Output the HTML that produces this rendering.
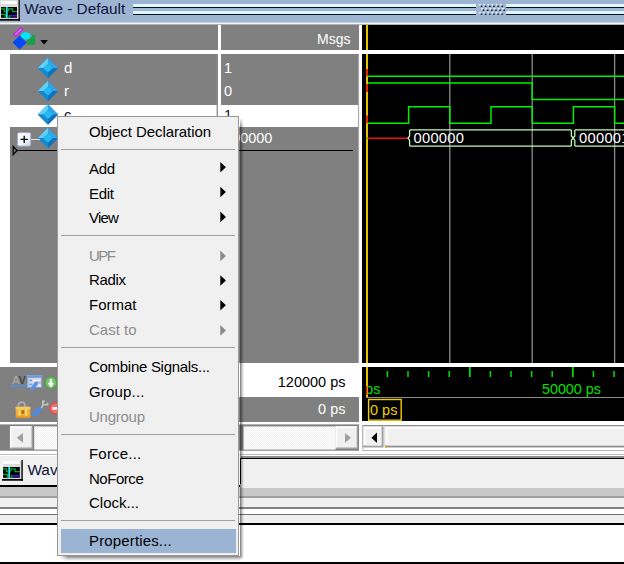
<!DOCTYPE html>
<html>
<head>
<meta charset="utf-8">
<style>
html,body{margin:0;padding:0;}
body{width:624px;height:564px;overflow:hidden;background:#fff;position:relative;font-family:"Liberation Sans",sans-serif;font-size:14.5px;}
.a{position:absolute;}
.t{position:absolute;white-space:nowrap;line-height:20px;height:20px;}
#root{position:absolute;left:0;top:0;width:624px;height:564px;overflow:hidden;}
.mi{position:absolute;left:89px;white-space:nowrap;line-height:20px;height:20px;color:#000;font-size:15px;}
.dis{color:#8d8d8d;}
.sep{position:absolute;left:61px;width:174px;height:1px;background:#a0a0a0;}
</style>
</head>
<body>
<div id="root">

<!-- title bar -->
<div class="a" style="left:0;top:0;width:624px;height:22px;background:#9db4d3;"></div>
<div class="a" style="left:0;top:22px;width:624px;height:1px;background:#c9d4e2;"></div>
<div class="a" style="left:0;top:23px;width:624px;height:1px;background:#f4f4f4;"></div>
<div class="a" style="left:0;top:24px;width:624px;height:1px;background:#b0b0b0;"></div>
<!-- grip lines -->
<div class="a" style="left:133px;top:4px;width:343px;height:2.6px;background:#dcf8fc;"></div>
<div class="a" style="left:133px;top:6.6px;width:343px;height:1.3px;background:#0c1018;"></div>
<div class="a" style="left:133px;top:10.8px;width:343px;height:2.8px;background:#dcf8fc;"></div>
<div class="a" style="left:133px;top:13.7px;width:343px;height:1.3px;background:#0c1018;"></div>
<div class="a" style="left:506px;top:4px;width:118px;height:2.6px;background:#dcf8fc;"></div>
<div class="a" style="left:506px;top:6.6px;width:118px;height:1.3px;background:#0c1018;"></div>
<div class="a" style="left:506px;top:10.8px;width:118px;height:2.8px;background:#dcf8fc;"></div>
<div class="a" style="left:506px;top:13.7px;width:118px;height:1.3px;background:#0c1018;"></div>
<svg class="a" style="left:470px;top:0px;" width="45" height="20" viewBox="470 0 45 20"><rect x="479.20" y="4.00" width="1.7" height="1.5" fill="#f8fcff"/><rect x="480.70" y="5.60" width="1.6" height="1.4" fill="#1c2230"/><rect x="483.35" y="4.00" width="1.7" height="1.5" fill="#f8fcff"/><rect x="484.85" y="5.60" width="1.6" height="1.4" fill="#1c2230"/><rect x="487.50" y="4.00" width="1.7" height="1.5" fill="#f8fcff"/><rect x="489.00" y="5.60" width="1.6" height="1.4" fill="#1c2230"/><rect x="491.65" y="4.00" width="1.7" height="1.5" fill="#f8fcff"/><rect x="493.15" y="5.60" width="1.6" height="1.4" fill="#1c2230"/><rect x="495.80" y="4.00" width="1.7" height="1.5" fill="#f8fcff"/><rect x="497.30" y="5.60" width="1.6" height="1.4" fill="#1c2230"/><rect x="499.95" y="4.00" width="1.7" height="1.5" fill="#f8fcff"/><rect x="501.45" y="5.60" width="1.6" height="1.4" fill="#1c2230"/><rect x="481.20" y="7.95" width="1.7" height="1.5" fill="#f8fcff"/><rect x="482.70" y="9.55" width="1.6" height="1.4" fill="#1c2230"/><rect x="485.35" y="7.95" width="1.7" height="1.5" fill="#f8fcff"/><rect x="486.85" y="9.55" width="1.6" height="1.4" fill="#1c2230"/><rect x="489.50" y="7.95" width="1.7" height="1.5" fill="#f8fcff"/><rect x="491.00" y="9.55" width="1.6" height="1.4" fill="#1c2230"/><rect x="493.65" y="7.95" width="1.7" height="1.5" fill="#f8fcff"/><rect x="495.15" y="9.55" width="1.6" height="1.4" fill="#1c2230"/><rect x="497.80" y="7.95" width="1.7" height="1.5" fill="#f8fcff"/><rect x="499.30" y="9.55" width="1.6" height="1.4" fill="#1c2230"/><rect x="501.95" y="7.95" width="1.7" height="1.5" fill="#f8fcff"/><rect x="503.45" y="9.55" width="1.6" height="1.4" fill="#1c2230"/><rect x="479.20" y="11.90" width="1.7" height="1.5" fill="#f8fcff"/><rect x="480.70" y="13.50" width="1.6" height="1.4" fill="#1c2230"/><rect x="483.35" y="11.90" width="1.7" height="1.5" fill="#f8fcff"/><rect x="484.85" y="13.50" width="1.6" height="1.4" fill="#1c2230"/><rect x="487.50" y="11.90" width="1.7" height="1.5" fill="#f8fcff"/><rect x="489.00" y="13.50" width="1.6" height="1.4" fill="#1c2230"/><rect x="491.65" y="11.90" width="1.7" height="1.5" fill="#f8fcff"/><rect x="493.15" y="13.50" width="1.6" height="1.4" fill="#1c2230"/><rect x="495.80" y="11.90" width="1.7" height="1.5" fill="#f8fcff"/><rect x="497.30" y="13.50" width="1.6" height="1.4" fill="#1c2230"/><rect x="499.95" y="11.90" width="1.7" height="1.5" fill="#f8fcff"/><rect x="501.45" y="13.50" width="1.6" height="1.4" fill="#1c2230"/></svg>
<div class="t" style="left:24.3px;top:-0.6px;font-size:15.35px;color:#10143a;">Wave - Default</div>
<!-- title icon -->
<svg class="a" style="left:0;top:0;" width="21" height="21" viewBox="0 0 21 21">
<rect x="0" y="0" width="20" height="21" fill="#dcdcdc"/>
<rect x="1" y="1.2" width="16" height="2.6" fill="#ffffff"/>
<rect x="1" y="7" width="16" height="10.8" fill="#000"/>
<rect x="18.5" y="0" width="1.3" height="21" fill="#000"/>
<rect x="0" y="19" width="19.8" height="1.7" fill="#000"/>
<path d="M1 8.8 H4.3 V11.6 H6 M8.6 11.6 V8.8 H12.5 V11.6 H17" stroke="#00a838" stroke-width="1.3" fill="none"/>
<path d="M1 14.3 H5.2 V17.6 M8.4 17.6 H9.4 V15" stroke="#00a838" stroke-width="1.3" fill="none"/>
<rect x="6" y="7" width="1.7" height="10.8" fill="#30e8f0"/>
<rect x="10" y="14.9" width="7" height="1.7" fill="#4410e0"/>
</svg>

<!-- main gray panes -->
<div class="a" style="left:0;top:25px;width:218px;height:25.4px;background:#808080;"></div>
<div class="a" style="left:221px;top:25px;width:138px;height:25.4px;background:#808080;"></div>
<div class="a" style="left:362px;top:25px;width:262px;height:25.4px;background:#000;"></div>

<!-- body panes -->
<div class="a" style="left:10px;top:54px;width:208px;height:309px;background:#808080;"></div>
<div class="a" style="left:221px;top:54px;width:138px;height:309px;background:#808080;"></div>
<div class="a" style="left:362px;top:54px;width:262px;height:309px;background:#000;"></div>

<!-- selected row -->
<div class="a" style="left:10px;top:104.7px;width:208px;height:22px;background:#fff;"></div>
<div class="a" style="left:221px;top:104.7px;width:138px;height:22px;background:#fff;"></div>

<!-- header content -->
<svg class="a" style="left:10px;top:25px;" width="42" height="26" viewBox="10 25 42 26">
<polygon points="12.7,34.8 20.8,27 24,29.2 15.9,37.2" fill="#c424e4"/>
<polygon points="14.6,34.6 20.9,28.6 22,29.4 15.7,35.6" fill="#e070f0"/>
<rect x="27" y="34.6" width="8" height="10.2" fill="#18a048"/>
<ellipse cx="26.6" cy="36" rx="5" ry="3.8" fill="#8090a4"/>
<ellipse cx="25.6" cy="35.9" rx="4.9" ry="3.6" fill="#00e4fc"/>
<polygon points="19.6,35.6 26.8,42.4 19.6,49.6 12.7,42.4" fill="#0848f0"/>
<polygon points="40.3,40.1 47.9,40.1 44.1,44.5" fill="#000"/>
</svg>
<div class="t" style="left:317px;top:29px;font-size:14px;color:#fff;">Msgs</div>
<!-- cursor in header -->
<div class="a" style="left:366px;top:25px;width:2px;height:25px;background:#e8c000;"></div>

<!-- name pane rows -->
<svg class="a" style="left:10px;top:54px;" width="60" height="104" viewBox="10 54 60 104">
<g transform="translate(48,68)">
<polygon points="0,-10.2 10.2,0 0,10.2 -10.2,0" fill="#1a8cd0"/>
<polygon points="0,-10.2 -10.2,0 -4.6,0 0,-4.6" fill="#64d0f8"/>
<polygon points="0,-10.2 10.2,0 4.6,0 0,-4.6" fill="#34a4e4"/>
<polygon points="0,10.2 -10.2,0 -4.6,0 0,4.6" fill="#1c88cc"/>
<polygon points="0,10.2 10.2,0 4.6,0 0,4.6" fill="#1272bc"/>
<polygon points="0,-4.6 4.6,0 0,4.6 -4.6,0" fill="#20bcf4"/>
</g>
<g transform="translate(48,91)">
<polygon points="0,-10.2 10.2,0 0,10.2 -10.2,0" fill="#1a8cd0"/>
<polygon points="0,-10.2 -10.2,0 -4.6,0 0,-4.6" fill="#64d0f8"/>
<polygon points="0,-10.2 10.2,0 4.6,0 0,-4.6" fill="#34a4e4"/>
<polygon points="0,10.2 -10.2,0 -4.6,0 0,4.6" fill="#1c88cc"/>
<polygon points="0,10.2 10.2,0 4.6,0 0,4.6" fill="#1272bc"/>
<polygon points="0,-4.6 4.6,0 0,4.6 -4.6,0" fill="#20bcf4"/>
</g>
<g transform="translate(48,114.5)">
<polygon points="0,-10.2 10.2,0 0,10.2 -10.2,0" fill="#1a8cd0"/>
<polygon points="0,-10.2 -10.2,0 -4.6,0 0,-4.6" fill="#64d0f8"/>
<polygon points="0,-10.2 10.2,0 4.6,0 0,-4.6" fill="#34a4e4"/>
<polygon points="0,10.2 -10.2,0 -4.6,0 0,4.6" fill="#1c88cc"/>
<polygon points="0,10.2 10.2,0 4.6,0 0,4.6" fill="#1272bc"/>
<polygon points="0,-4.6 4.6,0 0,4.6 -4.6,0" fill="#20bcf4"/>
</g>
<g transform="translate(48,138)">
<polygon points="0,-10.2 10.2,0 0,10.2 -10.2,0" fill="#1a8cd0"/>
<polygon points="0,-10.2 -10.2,0 -4.6,0 0,-4.6" fill="#64d0f8"/>
<polygon points="0,-10.2 10.2,0 4.6,0 0,-4.6" fill="#34a4e4"/>
<polygon points="0,10.2 -10.2,0 -4.6,0 0,4.6" fill="#1c88cc"/>
<polygon points="0,10.2 10.2,0 4.6,0 0,4.6" fill="#1272bc"/>
<polygon points="0,-4.6 4.6,0 0,4.6 -4.6,0" fill="#20bcf4"/>
</g>
<line x1="31" y1="139.5" x2="40" y2="139.5" stroke="#e0e0e0" stroke-width="1"/>
<defs><linearGradient id="pg" x1="0" y1="0" x2="1" y2="1"><stop offset="0" stop-color="#ffffff"/><stop offset="0.6" stop-color="#f0f2fa"/><stop offset="1" stop-color="#c4cce4"/></linearGradient></defs><rect x="17.4" y="132.6" width="13.4" height="13.6" rx="1.6" fill="url(#pg)" stroke="#98a0bc" stroke-width="0.9"/>
<path d="M20.6 139.4 H27.8 M24.2 135.8 V143" stroke="#000" stroke-width="1.3"/>
<polygon points="13.2,146.4 17,150.5 13.2,154.6" fill="none" stroke="#000" stroke-width="1.3"/>
</svg>
<div class="a" style="left:17px;top:149.9px;width:201px;height:1.2px;background:#000;"></div>
<div class="a" style="left:221px;top:149.9px;width:132px;height:1.2px;background:#000;"></div>
<div class="t" style="left:64px;top:58px;color:#fff;font-size:15px;">d</div>
<div class="t" style="left:64px;top:81px;color:#fff;font-size:15px;">r</div>
<div class="t" style="left:64px;top:104.5px;color:#101030;font-size:15px;">c</div>
<div class="t" style="left:64px;top:128px;color:#fff;font-size:15px;">q</div>
<svg class="a" style="left:214px;top:54px;" width="148" height="310" viewBox="214 54 148 310"><rect x="216.6" y="54" width="1.3" height="309.5" fill="#8a8a8a"/><rect x="358" y="54" width="1.1" height="309.5" fill="#a8a8a8"/></svg>
<!-- values -->
<div class="t" style="left:224px;top:58px;color:#fff;">1</div>
<div class="t" style="left:224px;top:81px;color:#fff;">0</div>
<div class="t" style="left:224px;top:105px;color:#101030;">1</div>
<div class="t" style="left:224px;top:128px;color:#fff;">000000</div>

<!-- waveform -->
<svg class="a" style="left:362px;top:54px;" width="262" height="309" viewBox="362 54 262 309">
<g stroke="#8c8c8c" stroke-width="1.3">
<line x1="449.8" y1="54" x2="449.8" y2="363"/>
<line x1="532.2" y1="54" x2="532.2" y2="363"/>
<line x1="614.6" y1="54" x2="614.6" y2="363"/>
</g>
<g stroke="#00f000" stroke-width="1.5" fill="none">
<path d="M368 76.3 H624"/>
<path d="M368 83 H532.2 V99.6 H624"/>
<path d="M368 123.2 H408.6 V106.7 H449.8 V123.2 H491 V106.7 H532.2 V123.2 H573.4 V106.7 H614.6 V123.2 H624"/>
</g>
<path d="M368 138.2 H408" stroke="#f01010" stroke-width="1.5"/>
<g stroke="#c0f8b8" stroke-width="1.3" fill="none" stroke-linejoin="round">
<path d="M408 138.2 L409.6 136 V130.4 L410.2 129.9 H570.8 L571.4 130.4 V136 L573.1 138.2 L571.4 140.4 V145.6 L570.8 146.1 H410.2 L409.6 145.6 V140.4 Z"/>
<path d="M624 129.9 H575.4 L574.8 130.4 V136 L573.1 138.2 L574.8 140.4 V145.6 L575.4 146.1 H624"/>
</g>
<!-- cursor -->
<rect x="366" y="54" width="2" height="309" fill="#e8c000"/>
<rect x="366" y="69" width="2" height="7.3" fill="#e82800"/>
<rect x="366" y="84" width="2" height="8" fill="#e82800"/>
<rect x="366" y="115.5" width="2" height="7.6" fill="#e82800"/>
<rect x="366" y="137.4" width="2" height="1.6" fill="#40c020"/>
</svg>
<div class="t" style="left:413.6px;top:128.3px;color:#fff;font-size:14.7px;letter-spacing:0.25px;">000000</div>
<div class="t" style="left:579px;top:128.3px;color:#fff;font-size:14.7px;letter-spacing:0.3px;">000001</div>

<!-- footer: name pane icons area -->
<div class="a" style="left:0;top:367px;width:218px;height:55px;background:#808080;"></div>
<!-- footer: value pane -->
<div class="a" style="left:221px;top:363px;width:138px;height:34px;background:#fff;"></div>
<div class="a" style="left:221px;top:397px;width:138px;height:25px;background:#808080;"></div>
<div class="t" style="left:221px;width:124.5px;text-align:right;top:372px;color:#000;">120000 ps</div>
<div class="t" style="left:221px;width:124.5px;text-align:right;top:399px;color:#fff;">0 ps</div>
<!-- footer: wave pane -->
<div class="a" style="left:362px;top:367px;width:262px;height:54px;background:#000;"></div>
<div class="a" style="left:366px;top:397.1px;width:258px;height:1.4px;background:#8c8c8c;"></div>
<div class="t" style="left:365.2px;top:378.6px;color:#00e000;font-size:14.3px;">ps</div>
<svg class="a" style="left:362px;top:367px;" width="262" height="55" viewBox="362 367 262 55">
<g stroke="#00e000" stroke-width="1.5">
<line x1="387.4" y1="371" x2="387.4" y2="377"/>
<line x1="408.0" y1="371" x2="408.0" y2="377"/>
<line x1="428.6" y1="371" x2="428.6" y2="377"/>
<line x1="449.2" y1="371" x2="449.2" y2="377"/>
<line x1="469.8" y1="367" x2="469.8" y2="377" stroke-width="1.8"/>
<line x1="490.4" y1="371" x2="490.4" y2="377"/>
<line x1="511.0" y1="371" x2="511.0" y2="377"/>
<line x1="531.6" y1="371" x2="531.6" y2="377"/>
<line x1="552.2" y1="371" x2="552.2" y2="377"/>
<line x1="572.8" y1="367" x2="572.8" y2="377" stroke-width="1.8"/>
<line x1="593.4" y1="371" x2="593.4" y2="377"/>
<line x1="614.0" y1="371" x2="614.0" y2="377"/>
</g>
<rect x="366" y="367" width="2" height="30" fill="#e8c000"/>
<rect x="366" y="386" width="1.4" height="9" fill="#e82800"/>
<rect x="368.6" y="399.5" width="32.6" height="20.7" fill="none" stroke="#f4cc00" stroke-width="1.4"/>
</svg>
<div class="t" style="left:542px;top:379px;color:#00e000;font-size:14.3px;">50000 ps</div>
<div class="t" style="left:370px;top:400px;color:#f0d000;font-size:14.5px;">0 ps</div>

<!-- scrollbars -->

<svg class="a" style="left:0;top:420px;" width="624" height="32" viewBox="0 420 624 32">
<defs><pattern id="chk" width="2" height="2" patternUnits="userSpaceOnUse"><rect width="2" height="2" fill="#f0f0f0"/><rect x="0" y="0" width="1" height="1" fill="#fff"/><rect x="1" y="1" width="1" height="1" fill="#fff"/></pattern></defs>
<rect x="0" y="424.4" width="218" height="26.3" fill="#808080"/><rect x="221" y="424.4" width="138" height="26.3" fill="#808080"/>
<rect x="34.2" y="426.4" width="183.8" height="23.2" fill="url(#chk)"/>
<rect x="10" y="426.4" width="22" height="22" fill="#f0f0f0"/>
<path d="M10.7 448.4 V427.1 H32" stroke="#fff" stroke-width="1.5" fill="none"/>
<path d="M10.5 448.2 H32.2 V426.6" stroke="#a0a0a0" stroke-width="1.4" fill="none"/>
<polygon points="16.8,437.8 23,433 23,442.7" fill="#a0a0a0"/>
<!-- value scroll -->
<rect x="243.5" y="426.4" width="92" height="23.2" fill="url(#chk)"/>
<rect x="335.5" y="426.4" width="22" height="22" fill="#f0f0f0"/>
<path d="M336.2 448.4 V427.1 H357.5" stroke="#fff" stroke-width="1.5" fill="none"/>
<path d="M336 448.2 H357.4 V426.6" stroke="#a0a0a0" stroke-width="1.4" fill="none"/>
<polygon points="351,437.8 345,433 345,442.7" fill="#a0a0a0"/>
<!-- wave scroll -->
<rect x="362" y="421" width="262" height="30" fill="#fff"/>
<rect x="362.2" y="425" width="261.8" height="1.2" fill="#8c8c8c"/>
<rect x="362.2" y="425" width="1.2" height="24" fill="#a8a8a8"/>
<rect x="363.4" y="426.2" width="260.6" height="21.2" fill="#e0e0e0"/>
<!-- button -->
<rect x="363.4" y="426.6" width="20" height="20.8" fill="#a0a0a0"/>
<rect x="363.4" y="426.6" width="18" height="18.8" fill="#ffffff"/>
<rect x="365.6" y="428.8" width="15.8" height="16.6" fill="#f0f0f0"/>
<polygon points="371.4,437.8 377,432.6 377,443" fill="#000"/>
<!-- thumb -->
<rect x="385.2" y="426.6" width="238.8" height="20.8" fill="#909090"/>
<rect x="385.2" y="426.6" width="238.8" height="18.8" fill="#ffffff"/>
<rect x="387.4" y="428.4" width="236.6" height="17" fill="#f0f0f0"/>
<rect x="385" y="446.4" width="2" height="1.4" fill="#e8c000"/>
</svg>

<!-- tab bar -->
<div class="a" style="left:0;top:450.6px;width:624px;height:3.4px;background:#fff;"></div>
<div class="a" style="left:362px;top:449.6px;width:262px;height:1px;background:#b4b4b4;"></div>
<div class="a" style="left:0;top:453.9px;width:624px;height:1.1px;background:#bcbcbc;"></div>
<div class="a" style="left:0;top:455px;width:624px;height:1.3px;background:#fff;"></div>
<div class="a" style="left:0;top:456.3px;width:624px;height:32px;background:#f0f0f0;"></div>
<div class="a" style="left:241px;top:456.3px;width:383px;height:1.3px;background:#909090;"></div>
<div class="a" style="left:240px;top:457.6px;width:384px;height:1.4px;background:#000;"></div>
<div class="a" style="left:239.8px;top:457.6px;width:1.6px;height:26px;background:#000;"></div>
<div class="a" style="left:0;top:484.6px;width:239.6px;height:2.1px;background:#000;"></div>
<!-- tab icon -->
<svg class="a" style="left:2.1px;top:460.3px;" width="22" height="21" viewBox="0 0 21 21" preserveAspectRatio="none">
<rect x="0" y="0" width="20" height="21" fill="#dcdcdc"/>
<rect x="1" y="1.2" width="16" height="2.6" fill="#ffffff"/>
<rect x="1" y="7" width="16" height="10.8" fill="#000"/>
<rect x="18.5" y="0" width="1.3" height="21" fill="#000"/>
<rect x="0" y="19" width="19.8" height="1.7" fill="#000"/>
<path d="M1 8.8 H4.3 V11.6 H6 M8.6 11.6 V8.8 H12.5 V11.6 H17" stroke="#00a838" stroke-width="1.3" fill="none"/>
<path d="M1 14.3 H5.2 V17.6 M8.4 17.6 H9.4 V15" stroke="#00a838" stroke-width="1.3" fill="none"/>
<rect x="6" y="7" width="1.7" height="10.8" fill="#30e8f0"/>
<rect x="10" y="14.9" width="7" height="1.7" fill="#4410e0"/>
<rect x="0" y="0" width="18.5" height="1" fill="#f4f4f4"/><rect x="0" y="0" width="1" height="19" fill="#f4f4f4"/>
</svg>
<div class="t" style="left:27.4px;top:460.3px;font-size:15.4px;color:#10143a;">Wave</div>

<!-- bottom bands -->
<div class="a" style="left:0;top:487px;width:624px;height:9.3px;background:#c8c8c8;"></div>
<div class="a" style="left:241px;top:485px;width:383px;height:3px;background:#f0f0f0;"></div>
<div class="a" style="left:0;top:496.3px;width:624px;height:1.5px;background:#a0a0a0;"></div>
<div class="a" style="left:0;top:497.8px;width:624px;height:9.2px;background:#f0f0f0;"></div>
<div class="a" style="left:0;top:507px;width:624px;height:1.5px;background:#808080;"></div>
<div class="a" style="left:0;top:508.5px;width:624px;height:5.3px;background:#fff;"></div>
<div class="a" style="left:0;top:513.8px;width:624px;height:1.6px;background:#707070;"></div>
<div class="a" style="left:0;top:515.4px;width:624px;height:7.6px;background:#f0f0f0;"></div>
<div class="a" style="left:0;top:523px;width:624px;height:1.6px;background:#000;"></div>
<div class="a" style="left:0;top:524.6px;width:624px;height:38px;background:#fff;"></div>
<div class="a" style="left:0;top:562px;width:624px;height:2px;background:#000;"></div>

<!-- footer icons -->
<svg class="a" style="left:10px;top:372px;" width="50" height="48" viewBox="10 372 50 48">
<!-- AV icon -->
<text x="12" y="383.8" font-family="Liberation Sans, sans-serif" font-size="11" font-weight="bold" fill="#a4a4a4">A</text>
<text x="18.4" y="383.8" font-family="Liberation Sans, sans-serif" font-size="11" font-weight="bold" fill="#484848">V</text>
<path d="M12 385.8 H25.3 M12.3 384.2 V387.6 M25 384.2 V387.6" stroke="#4a90f0" stroke-width="1.3" fill="none"/>
<!-- window icon -->
<rect x="27.3" y="375.2" width="14.8" height="12.6" fill="#d4d8e2"/>
<rect x="27.3" y="375.2" width="14.8" height="2.6" fill="#6898e0"/>
<rect x="27.3" y="377.8" width="1" height="10" fill="#78a0e0"/>
<rect x="41.1" y="377.8" width="1" height="10" fill="#78a0e0"/>
<rect x="27.3" y="387" width="14.8" height="1" fill="#78a0e0"/>
<rect x="29.3" y="379.6" width="2.6" height="1.6" fill="#6c9ce8"/>
<rect x="29.3" y="383.6" width="2.6" height="1.6" fill="#6c9ce8"/>
<rect x="33" y="379.6" width="7" height="1.6" fill="#eef0f4"/>
<rect x="37" y="381.6" width="4" height="2" fill="#b4b8c0"/>
<rect x="38.5" y="384.6" width="2" height="1.8" fill="#f4f4f8"/>
<path d="M32.2 388.6 L36.2 383.4" stroke="#5a90e8" stroke-width="3.6" stroke-linecap="round"/>
<!-- green circle -->
<circle cx="50.9" cy="382.6" r="6.3" fill="#50a848"/>
<circle cx="50.9" cy="382.6" r="5.1" fill="#74c868"/>
<path d="M50.9 379 V385.6 M48.9 382.8 L50.9 385.8 L52.9 382.8" stroke="#fff" stroke-width="2.2" fill="none"/>
<!-- lock -->
<path d="M18.4 407.5 V405.5 A3.3 3.3 0 0 1 25 405.5 V407.5" stroke="#b0b0b0" stroke-width="1.7" fill="none"/>
<rect x="15.7" y="406.8" width="14.6" height="10.8" rx="0.8" fill="#eeb038"/>
<rect x="15.7" y="406.8" width="14.6" height="2.6" fill="#f4cc68"/>
<rect x="15.7" y="415.6" width="14.6" height="2" fill="#e89c20"/>
<rect x="18.6" y="409.6" width="1.8" height="6" fill="#f8dc80"/><rect x="25.2" y="409.6" width="1.8" height="6" fill="#f8dc80"/><rect x="21.5" y="410.4" width="2.8" height="3.4" fill="#a87010"/>
<!-- wrench -->
<path d="M34.6 414.2 L39.8 409.4" stroke="#5088e0" stroke-width="4.6" stroke-linecap="round"/>
<path d="M41.2 408 L42.8 405.6 V401.4 H45 M43.2 404.8 H47.6 V402.6" stroke="#c4c4c4" stroke-width="1.6" fill="none"/>
<!-- red circle -->
<circle cx="55.5" cy="408.4" r="6.3" fill="#e04848"/>
<circle cx="55.5" cy="408.4" r="5" fill="#f07070"/>
<rect x="52.3" y="407.2" width="6.4" height="2.4" fill="#fff"/>
</svg>

<!-- context menu -->
<div class="a" style="left:60px;top:556px;width:180px;height:4.5px;background:linear-gradient(to bottom, rgba(0,0,0,0.5), rgba(0,0,0,0.18) 55%, rgba(0,0,0,0));-webkit-mask-image:linear-gradient(to right, transparent, #000 8px);mask-image:linear-gradient(to right, transparent, #000 8px);"></div>
<div class="a" style="left:240px;top:118px;width:4px;height:438px;background:linear-gradient(to right, rgba(0,0,0,0.52), rgba(0,0,0,0.2) 55%, rgba(0,0,0,0));-webkit-mask-image:linear-gradient(to bottom, transparent, #000 9px);mask-image:linear-gradient(to bottom, transparent, #000 9px);"></div>
<div class="a" style="left:240px;top:556px;width:4px;height:4.5px;background:radial-gradient(circle at 0 0, rgba(0,0,0,0.45), rgba(0,0,0,0) 4.2px);"></div>
<div class="a" style="left:57.3px;top:115.6px;width:180.2px;height:438.6px;background:#f0f0f0;border:1px solid #989898;"></div>
<div class="a" style="left:61px;top:528.5px;width:174.8px;height:24.2px;background:#9bb4d4;"></div>
<div class="mi" style="top:122px;letter-spacing:-0.08px;">Object Declaration</div>
<div class="sep" style="top:149px;"></div>
<div class="mi" style="top:158.5px;letter-spacing:-0.35px;">Add</div>
<div class="mi" style="top:183.5px;letter-spacing:-0.29px;">Edit</div>
<div class="mi" style="top:208px;letter-spacing:-0.80px;">View</div>
<div class="sep" style="top:235.3px;"></div>
<div class="mi dis" style="top:245.5px;letter-spacing:-1.50px;">UPF</div>
<div class="mi" style="top:270px;letter-spacing:-0.36px;">Radix</div>
<div class="mi" style="top:295px;">Format</div>
<div class="mi dis" style="top:320px;">Cast to</div>
<div class="sep" style="top:347.2px;"></div>
<div class="mi" style="top:357px;letter-spacing:-0.29px;">Combine Signals...</div>
<div class="mi" style="top:382px;letter-spacing:0.17px;">Group...</div>
<div class="mi dis" style="top:406.5px;letter-spacing:-0.26px;">Ungroup</div>
<div class="sep" style="top:433.8px;"></div>
<div class="mi" style="top:444px;letter-spacing:0.19px;">Force...</div>
<div class="mi" style="top:468.5px;letter-spacing:-0.46px;">NoForce</div>
<div class="mi" style="top:493px;">Clock...</div>
<div class="sep" style="top:520.3px;"></div>
<div class="mi" style="top:531px;letter-spacing:0.15px;">Properties...</div>

<svg class="a" style="left:215px;top:155px;" width="20" height="190" viewBox="215 155 20 190"><polygon points="220.3,161.9 225.9,167.2 220.3,172.5" fill="#000"/><polygon points="220.3,186.7 225.9,192.0 220.3,197.3" fill="#000"/><polygon points="220.3,211.6 225.9,216.9 220.3,222.2" fill="#000"/><polygon points="220.3,250.6 225.9,255.9 220.3,261.2" fill="#8a8a8a"/><polygon points="220.3,275.2 225.9,280.5 220.3,285.8" fill="#000"/><polygon points="220.3,299.9 225.9,305.2 220.3,310.5" fill="#000"/><polygon points="220.3,325.1 225.9,330.4 220.3,335.7" fill="#8a8a8a"/></svg>
</div>
</body>
</html>
